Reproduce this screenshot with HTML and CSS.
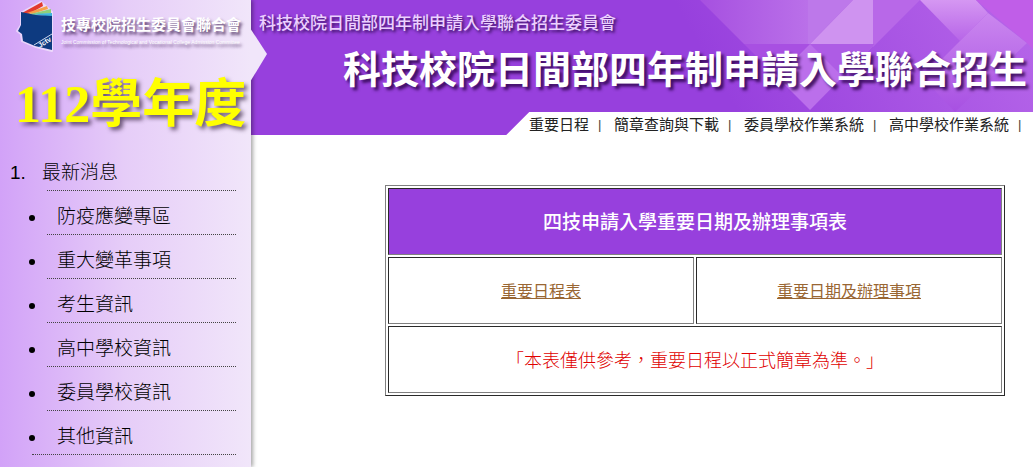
FILE: index.html
```html
<!DOCTYPE html>
<html lang="zh-Hant">
<head>
    <meta charset="UTF-8">
    <meta name="viewport" content="width=device-width, initial-scale=1.0">
    <title>科技校院日間部四年制申請入學聯合招生委員會</title>
    <link rel="stylesheet" href="styles.css">
</head>
<body>
    <div class="page">
        <aside class="sidebar">
            <svg class="notch" width="18" height="54" viewBox="0 0 18 54">
                <path d="M0 0L17 26L0 54Z" fill="#f1e6fa"/>
            </svg>
            <div class="logo">
                <svg width="42" height="54" viewBox="0 0 42 54">
                    <path d="M7 13L27 2L38 12V51L22 47L8 41L7 34L3 31L7 25Z" fill="#fff" stroke="#fff" stroke-width="2" stroke-linejoin="round" opacity=".5"/>
                    <path d="M8 13L28 2L29 6L15 14Z" fill="#e23a2e"/>
                    <path d="M13 13L33 6L34 9L18 14Z" fill="#f5a04a"/>
                    <path d="M16 14L37 9V13L20 15Z" fill="#8fcf7a"/>
                    <path d="M18 14L38 13V17Z" fill="#3fb4dc"/>
                    <path d="M7 12L22 15L38 16V50L21 46L9 41L8 34L4 31L7 25Z" fill="#0d3a80"/>
                    <path d="M20 45L38 34" stroke="#cdd8ee" stroke-width="1"/>
                    <text x="26" y="48" transform="rotate(-32 26 48)" class="logo-mark">Jctv</text>
                </svg>
                <div class="logo-text">
                    <div class="logo-name">技專校院招生委員會聯合會</div>
                    <div class="logo-en">Joint Commission of Technological and Vocational College Admission Committee</div>
                </div>
            </div>
            <div class="year">112學年度</div>
            <ol class="menu">
                <li>最新消息</li>
            </ol>
            <ul class="submenu">
                <li>防疫應變專區</li>
                <li>重大變革事項</li>
                <li>考生資訊</li>
                <li>高中學校資訊</li>
                <li>委員學校資訊</li>
                <li>其他資訊</li>
            </ul>
        </aside>
        <div class="content">
            <header class="banner">
                <svg class="facets" width="400" height="112" viewBox="0 0 400 112">
                    <defs>
                        <linearGradient id="glow" gradientUnits="userSpaceOnUse" x1="60" y1="100" x2="340" y2="-60">
                            <stop offset="0.1" stop-color="#b868ea" stop-opacity="0"/>
                            <stop offset="1" stop-color="#b868ea" stop-opacity=".9"/>
                        </linearGradient>
                        <linearGradient id="left" x1="0" y1="0" x2="1" y2="0">
                            <stop offset="0" stop-color="#a650e0"/>
                            <stop offset="1" stop-color="#ba70e9"/>
                        </linearGradient>
                        <linearGradient id="stripe" x1="0" y1="0" x2="0" y2="1">
                            <stop offset="0" stop-color="#d597f2"/>
                            <stop offset="1" stop-color="#b765e8"/>
                        </linearGradient>
                        <linearGradient id="fall" x1="0" y1="0" x2="0" y2="1">
                            <stop offset="0" stop-color="#cb87ef"/>
                            <stop offset="1" stop-color="#a750e2"/>
                        </linearGradient>
                    </defs>
                    <rect width="400" height="112" fill="url(#glow)"/>
                    <path d="M67 0H175V44H111Z" fill="url(#left)"/>
                    <path d="M175 0H220L177 44H175Z" fill="#bd78ea"/>
                    <path d="M220 0H240V44H177Z" fill="#cf93f0"/>
                    <path d="M240 0H287L240 47Z" fill="#b868e8"/>
                    <path d="M111 44H177L144 77Z" fill="#a850e2"/>
                    <path d="M177 44H242L177 110L144 77Z" fill="#bb6feb"/>
                    <path d="M177 44H242L210 77Z" fill="#ae5ce5"/>
                    <path d="M287 0H343L355 13L327 41Z" fill="url(#stripe)"/>
                    <path d="M327 41L355 13L394 43L322 112L290 78Z" fill="url(#fall)"/>
                    <path d="M343 0H400V49L394 43Z" fill="#c05ee8"/>
                </svg>
                <div class="committee">科技校院日間部四年制申請入學聯合招生委員會</div>
                <h1>科技校院日間部四年制申請入學聯合招生</h1>
            </header>
            <div class="navbar">
                <nav class="topnav">
                    <a href="#">重要日程</a><span>|</span>
                    <a href="#">簡章查詢與下載</a><span>|</span>
                    <a href="#">委員學校作業系統</a><span>|</span>
                    <a href="#">高中學校作業系統</a><span>|</span>
                </nav>
            </div>
            <main>
                <table class="schedule">
                    <tr><th colspan="2">四技申請入學重要日期及辦理事項表</th></tr>
                    <tr>
                        <td><a href="#">重要日程表</a></td>
                        <td><a href="#">重要日期及辦理事項</a></td>
                    </tr>
                    <tr><td colspan="2" class="note">「本表僅供參考，重要日程以正式簡章為準。」</td></tr>
                </table>
            </main>
        </div>
    </div>
</body>
</html>
```
FILE: styles.css
```css
* {
    box-sizing: border-box;
}
body {
    margin: 0;
    background: #fff;
    font-family: "Liberation Sans", "Noto Sans CJK TC", sans-serif;
    font-weight: 300;
    color: #000;
    overflow-x: hidden;
}
.page {
    display: flex;
    min-height: 100vh;
}

/* left column */
.sidebar {
    position: relative;
    z-index: 1;
    flex: 0 0 251px;
    background: linear-gradient(to right, #d2a2f8, #e6cdf8 50%, #f1e6fa);
    box-shadow: 2px 0 4px rgba(0,0,0,0.35);
}
.notch {
    position: absolute;
    left: 250px;
    top: 28px;
}
.logo {
    display: flex;
    height: 54px;
    padding-left: 14px;
}
.logo-mark {
    font: bold 7px "Liberation Sans", sans-serif;
    fill: #fff;
}
.logo-text {
    padding: 15px 0 0 5px;
    color: #fff;
    white-space: nowrap;
    text-shadow: 2px 3px 3px rgba(60,30,80,0.8);
}
.logo-name {
    font-size: 15px;
    font-weight: 700;
    line-height: 20px;
}
.logo-en {
    font-size: 5px;
    font-weight: 400;
    line-height: 14px;
}
.year {
    padding: 21px 0 0 15px;
    font-family: "Liberation Serif", "Noto Sans CJK TC", serif;
    font-size: 52px;
    font-weight: 700;
    line-height: 60px;
    white-space: nowrap;
    color: #ff0;
    text-shadow: 3px 3px 4px rgba(50,30,60,0.7);
}
.menu,
.submenu {
    margin: 0;
    font-size: 19px;
    line-height: 34px;
}
.menu li::after,
.submenu li::after {
    content: "";
    display: block;
    border-bottom: 1px dotted #444;
}
.menu {
    padding: 21px 15px 0 31px;
}
.menu li {
    height: 35px;
    padding-left: 11px;
}
.menu li::after {
    margin-left: 5px;
}
.submenu {
    padding: 0 15px 0 47px;
}
.submenu li {
    height: 44px;
    padding: 9px 0 0 10px;
}
.submenu li::after {
    margin-left: -10px;
}
.submenu li:last-child::after {
    margin-left: -25px;
}

/* right column */
.content {
    flex: 1;
    min-width: 0;
}
.banner {
    position: relative;
    height: 112px;
    background: #9740dd;
}
.facets {
    position: absolute;
    top: 0;
    right: 0;
}
.committee,
.banner h1 {
    position: relative;
    margin: 0;
    white-space: nowrap;
}
.committee {
    padding: 10px 0 0 8px;
    font-size: 17px;
    font-weight: 500;
    line-height: 28px;
    color: #ecd0ff;
    text-shadow: 2px 2px 3px rgba(30,0,60,0.8);
}
.banner h1 {
    padding: 6px 0 0 92px;
    font-size: 38px;
    font-weight: 700;
    line-height: 52px;
    color: #fff;
    text-shadow: 3px 3px 3px rgba(40,0,70,0.8);
}
.navbar {
    background: #9740dd;
}
.topnav {
    display: flex;
    height: 23px;
    margin-left: 255px;
    padding-left: 23px;
    font-size: 15px;
    font-weight: 400;
    line-height: 26px;
    white-space: nowrap;
    background: linear-gradient(135deg, #9740dd 16px, #fff 17px);
}
.topnav a {
    color: #222;
    text-decoration: none;
}
.topnav span {
    flex: 0 0 25px;
    padding-left: 9px;
    font-size: 13px;
    color: #443;
}
main {
    padding: 50px 28px 0 134px;
}
.schedule {
    width: 100%;
    table-layout: fixed;
    border: 1px solid;
    border-color: #808080 #2a2a2a #2a2a2a #808080;
    border-collapse: separate;
    border-spacing: 2px;
}
.schedule th,
.schedule td {
    height: 67px;
    padding: 0 0 2px;
    border: 1px solid;
    border-color: #2a2a2a #808080 #808080 #2a2a2a;
    text-align: center;
    font-size: 16px;
}
.schedule th {
    background: #9740dd;
    color: #fff;
    font-size: 19px;
    font-weight: 500;
}
.schedule a {
    color: #996633;
    font-weight: 400;
}
.schedule .note {
    color: #e00000;
    font-size: 18px;
}
```
